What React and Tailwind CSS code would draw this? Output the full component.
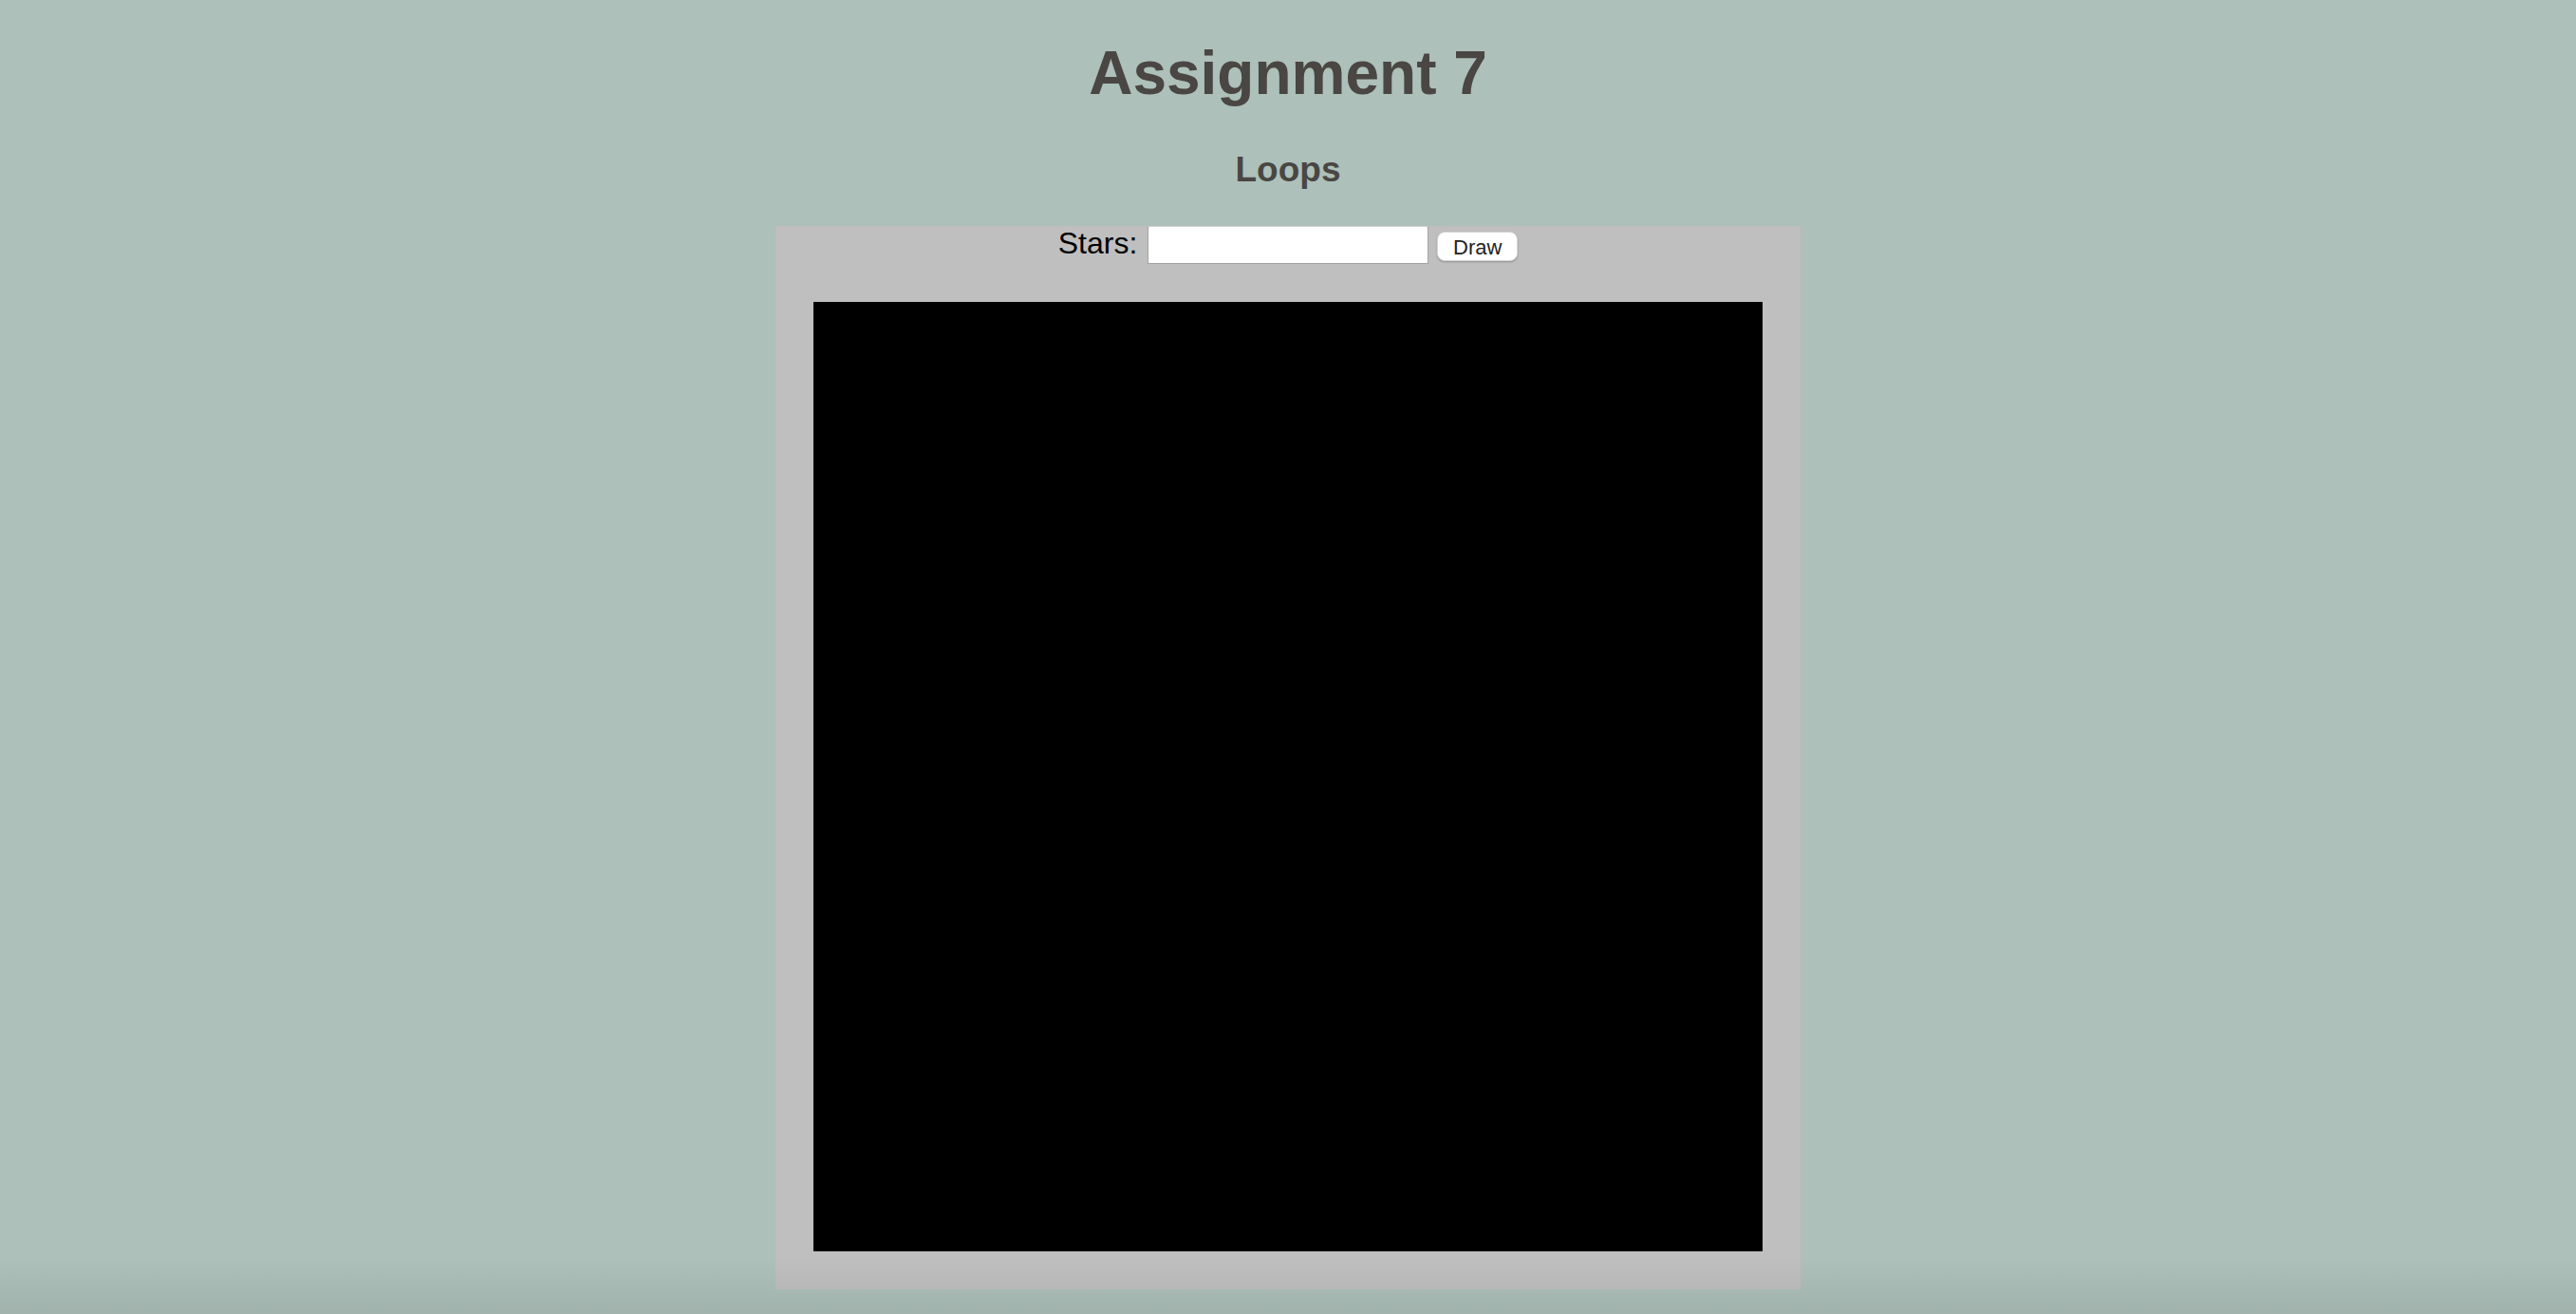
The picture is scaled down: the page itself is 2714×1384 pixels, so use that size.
export default function App() {
  return (
    <div className="relative min-h-[1384px] overflow-hidden bg-[#adc0b9] font-['Liberation_Sans',Arial,sans-serif]">
      <header className="pt-[40px] text-center text-[#494643]">
        <h1 className="text-[64px] font-bold leading-[74px]">Assignment 7</h1>
        <h3 className="mt-[43px] text-[37px] font-bold leading-[43px]">Loops</h3>
      </header>

      {/* drawing panel */}
      <main className="mx-auto mt-[39px] w-[1080px] bg-[#bfbfbf] px-10 pb-10">
        <div className="-mt-px flex h-10 items-center justify-center">
          <label className="-mt-[3px] text-[32px] leading-[37px] text-black">Stars:</label>
          <input
            type="text"
            className="ml-[11px] h-10 w-[296px] border border-[#a3a3a3] border-t-[#d0d0d0] bg-white px-2 text-[26px] outline-none"
          />
          <button className="ml-[9px] mt-[2px] h-[31px] w-[85px] rounded-[8px] border border-[#d6d6d6] bg-white pt-[3px] text-[22px] leading-none text-[#222] shadow-[0_1px_2px_rgba(0,0,0,0.25)]">
            Draw
          </button>
        </div>
        <div className="mt-10 h-[1000px] w-[1000px] bg-black" />
      </main>

      {/* window edge shading */}
      <div className="pointer-events-none absolute inset-x-0 bottom-0 h-[60px] bg-gradient-to-b from-transparent to-black/[0.07]" />
    </div>
  )
}
